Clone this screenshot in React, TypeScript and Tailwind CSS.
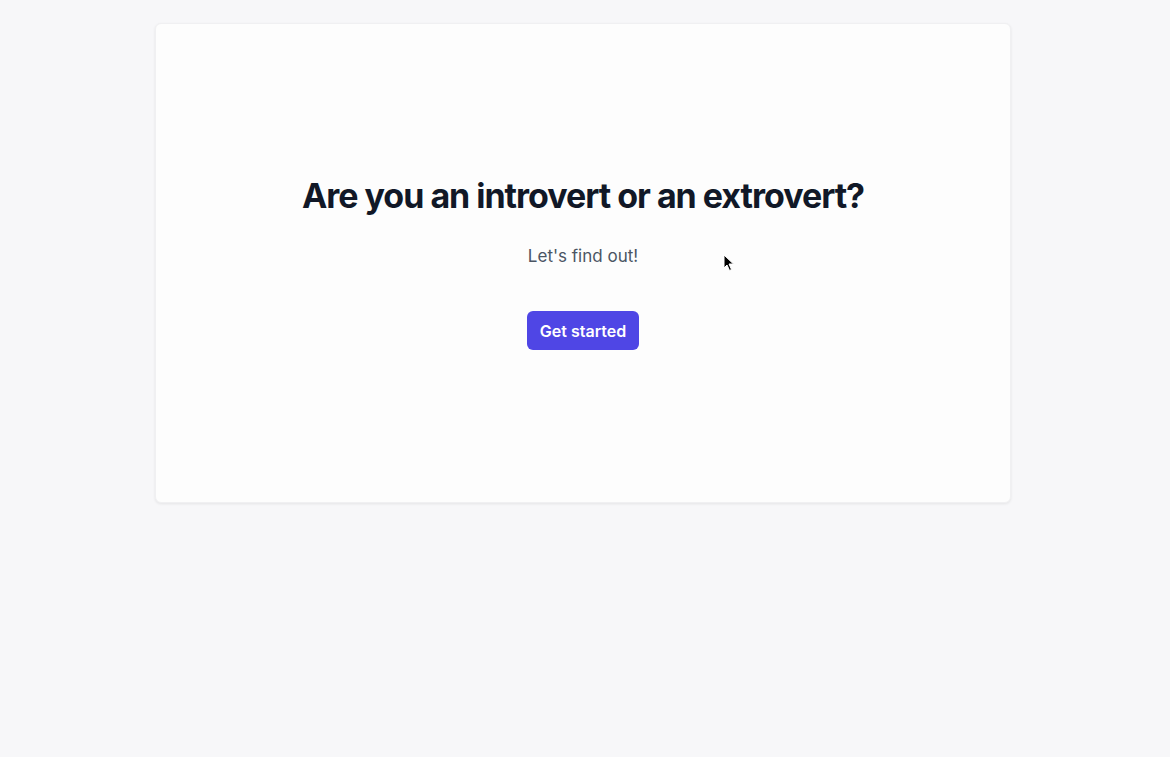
export default function App() {
  return (
    <div className="min-h-[757px] w-full bg-[#f7f7f9] pt-[23px] flex justify-center" style={{ fontFamily: "Inter, 'Noto Sans', sans-serif" }}>
      <div className="relative mr-[4px] w-[856px] h-[480px] bg-[#fdfdfd] rounded-md shadow-[0_1px_3px_rgba(0,0,0,0.08)] border border-[#f0f0f2] flex flex-col items-center justify-center">
        <h1 className="text-[34px] leading-[40px] font-bold tracking-[-0.03em] text-[#111827]">
          Are you an introvert or an extrovert?
        </h1>
        <p className="mt-[26px] text-[17px] leading-7 text-[#4b5563]">Let's find out!</p>
        <button className="mt-[41px] h-[39px] px-[13px] rounded-md bg-[#4f46e5] text-white text-base font-semibold">
          Get started
        </button>
        <svg className="absolute left-[567px] top-[230px]" width="12" height="18" viewBox="0 0 12 18">
          <path d="M1 1 L1 14 L4 11 L6.5 16.5 L8.5 15.5 L6 10 L10.5 10 Z" fill="#000" stroke="#fff" strokeWidth="1" />
        </svg>
      </div>
    </div>
  );
}
